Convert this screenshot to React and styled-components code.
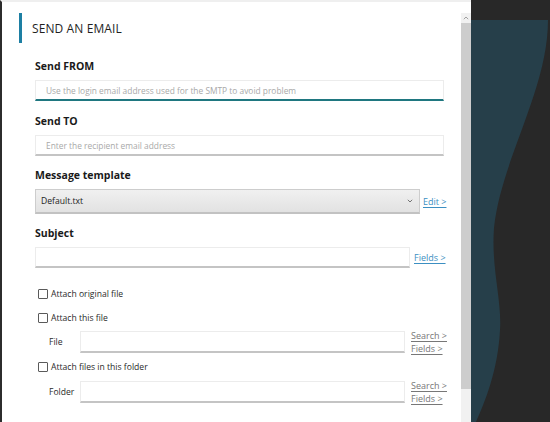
import React from "react";
import styled, { createGlobalStyle } from "styled-components";

const GlobalStyle = createGlobalStyle`
  html, body { margin: 0; padding: 0; background: #282828; }
  body { font-family: "Open Sans", "Liberation Sans", sans-serif; }
  * { box-sizing: border-box; }
`;

const Screen = styled.div`
  display: flex;
  width: 550px;
  height: 422px;
  overflow: hidden;
  background: #282828;
`;

const Panel = styled.div`
  width: 471px;
  height: 422px;
  flex: 0 0 471px;
  background: #ffffff;
  border-left: 2px solid #2c2c2c;
  border-top: 2px solid #efefef;
  padding-top: 11px;
  display: flex;
`;

const Content = styled.div`
  flex: 1;
  min-width: 0;
  overflow: hidden;
  display: flex;
  flex-direction: column;
`;

const Heading = styled.h1`
  margin: 0 0 0 17px;
  height: 30px;
  border-left: 3px solid #1d7fa3;
  padding-left: 10px;
  display: flex;
  align-items: center;
  font-size: 12px;
  font-weight: 400;
  color: #1f1f1f;
  letter-spacing: 0.1px;
`;

const Form = styled.div`
  padding: 16px 17px 0 33px;
  display: flex;
  flex-direction: column;
`;

const Label = styled.div`
  height: 14px;
  line-height: 14px;
  font-size: 10.5px;
  font-weight: 700;
  color: #1a1a1a;
  margin: ${(p) => p.$top || 0}px 0 7px 0;
`;

const TextInput = styled.input`
  display: block;
  width: ${(p) => (p.$w ? `${p.$w}px` : "100%")};
  flex: ${(p) => (p.$w ? `0 0 ${p.$w}px` : "none")};
  height: ${(p) => p.$h || 21}px;
  border: 1px solid #ececec;
  border-bottom: 2px solid ${(p) => (p.$focus ? "#1f7780" : "#c4c4c4")};
  background: #fff;
  padding: 0 10px;
  font-family: "Open Sans", "Liberation Sans", sans-serif;
  font-size: 8.4px;
  color: #333;
  outline: none;
  &::placeholder { color: #a9a9a9; }
`;

const Row = styled.div`
  display: flex;
  align-items: center;
  gap: ${(p) => p.$gap || 0}px;
  margin-top: ${(p) => p.$top || 0}px;
  padding-left: ${(p) => p.$indent || 0}px;
`;

const Select = styled.div`
  flex: 0 0 385px;
  height: 25px;
  border: 1px solid #cdcdcd;
  border-bottom: 2px solid #c2c2c2;
  background: linear-gradient(#f0f0f0, #e2e2e2);
  display: flex;
  align-items: center;
  justify-content: space-between;
  padding: 0 6px 0 5px;
  font-size: 8.6px;
  font-weight: 500;
  color: #222;
`;

const Chevron = styled.svg`
  width: 6px;
  height: 4px;
`;

const Link = styled.a`
  font-size: 9px;
  color: ${(p) => p.$color || "#3c8fc2"};
  text-decoration: underline;
  text-underline-offset: 1.5px;
  line-height: 13px;
  white-space: nowrap;
  cursor: pointer;
`;

const LinkStack = styled.div`
  display: flex;
  flex-direction: column;
  margin: -2px 0 -2px 6px;
`;

const CheckRow = styled.label`
  display: flex;
  align-items: center;
  gap: 3px;
  height: 14px;
  padding-left: 3px;
  margin-top: ${(p) => p.$top || 0}px;
  font-size: 8.6px;
  font-weight: 500;
  color: #2a2a2a;
`;

const Box = styled.span`
  width: 10px;
  height: 10px;
  border: 1px solid #5a5a5a;
  border-radius: 1px;
  background: #fff;
`;

const SubLabel = styled.span`
  flex: 0 0 31px;
  font-size: 8.6px;
  font-weight: 500;
  color: #2a2a2a;
`;

const ScrollBar = styled.div`
  width: 10px;
  flex: 0 0 10px;
  display: flex;
  flex-direction: column;
`;

const ScrollArrow = styled.div`
  height: 10px;
  background: #f1f1f1;
  display: flex;
  align-items: center;
  justify-content: center;
`;

const ScrollThumb = styled.div`
  height: 366px;
  background: #cdcdcd;
`;

const ScrollRest = styled.div`
  flex: 1;
  background: #f1f1f1;
`;

const Backdrop = styled.div`
  flex: 1;
  height: 422px;
  background: #282828;
`;

const Art = styled.svg`
  display: block;
  width: 79px;
  height: 422px;
`;

export default function App() {
  return (
    <>
      <GlobalStyle />
      <Screen>
        <Panel>
          <Content>
            <Heading>SEND AN EMAIL</Heading>
            <Form>
              <Label>Send FROM</Label>
              <TextInput
                $focus
                readOnly
                placeholder="Use the login email address used for the SMTP to avoid problem"
              />
              <Label $top={13}>Send TO</Label>
              <TextInput readOnly placeholder="Enter the recipient email address" />
              <Label $top={12}>Message template</Label>
              <Row $gap={3}>
                <Select>
                  <span>Default.txt</span>
                  <Chevron viewBox="0 0 6 4">
                    <path d="M0.8 0.8 L3 3 L5.2 0.8" fill="none" stroke="#666" strokeWidth="0.9" />
                  </Chevron>
                </Select>
                <Link>Edit &gt;</Link>
              </Row>
              <Label $top={12}>Subject</Label>
              <Row $gap={4}>
                <TextInput $w={375} readOnly />
                <Link>Fields &gt;</Link>
              </Row>
              <CheckRow $top={19}>
                <Box />
                Attach original file
              </CheckRow>
              <CheckRow $top={10}>
                <Box />
                Attach this file
              </CheckRow>
              <Row $top={6} $indent={14}>
                <SubLabel>File</SubLabel>
                <TextInput $w={325} $h={22} readOnly />
                <LinkStack>
                  <Link $color="#777">Search &gt;</Link>
                  <Link $color="#777">Fields &gt;</Link>
                </LinkStack>
              </Row>
              <CheckRow $top={7}>
                <Box />
                Attach files in this folder
              </CheckRow>
              <Row $top={7} $indent={14}>
                <SubLabel>Folder</SubLabel>
                <TextInput $w={325} $h={22} readOnly />
                <LinkStack>
                  <Link $color="#777">Search &gt;</Link>
                  <Link $color="#777">Fields &gt;</Link>
                </LinkStack>
              </Row>
            </Form>
          </Content>
          <ScrollBar>
            <ScrollArrow>
              <svg width="6" height="4" viewBox="0 0 6 4">
                <path d="M0.8 3.2 L3 1 L5.2 3.2" fill="none" stroke="#a0a0a0" strokeWidth="1" />
              </svg>
            </ScrollArrow>
            <ScrollThumb />
            <ScrollRest />
          </ScrollBar>
        </Panel>
        <Backdrop>
          <Art viewBox="0 0 79 422">
            <path
              d="M0 20 H77 C77 90 30 160 23 228 C 20 268 31 300 29 330 C 27 370 14 402 5 422 H0 Z"
              fill="#263f4a"
            />
          </Art>
        </Backdrop>
      </Screen>
    </>
  );
}
